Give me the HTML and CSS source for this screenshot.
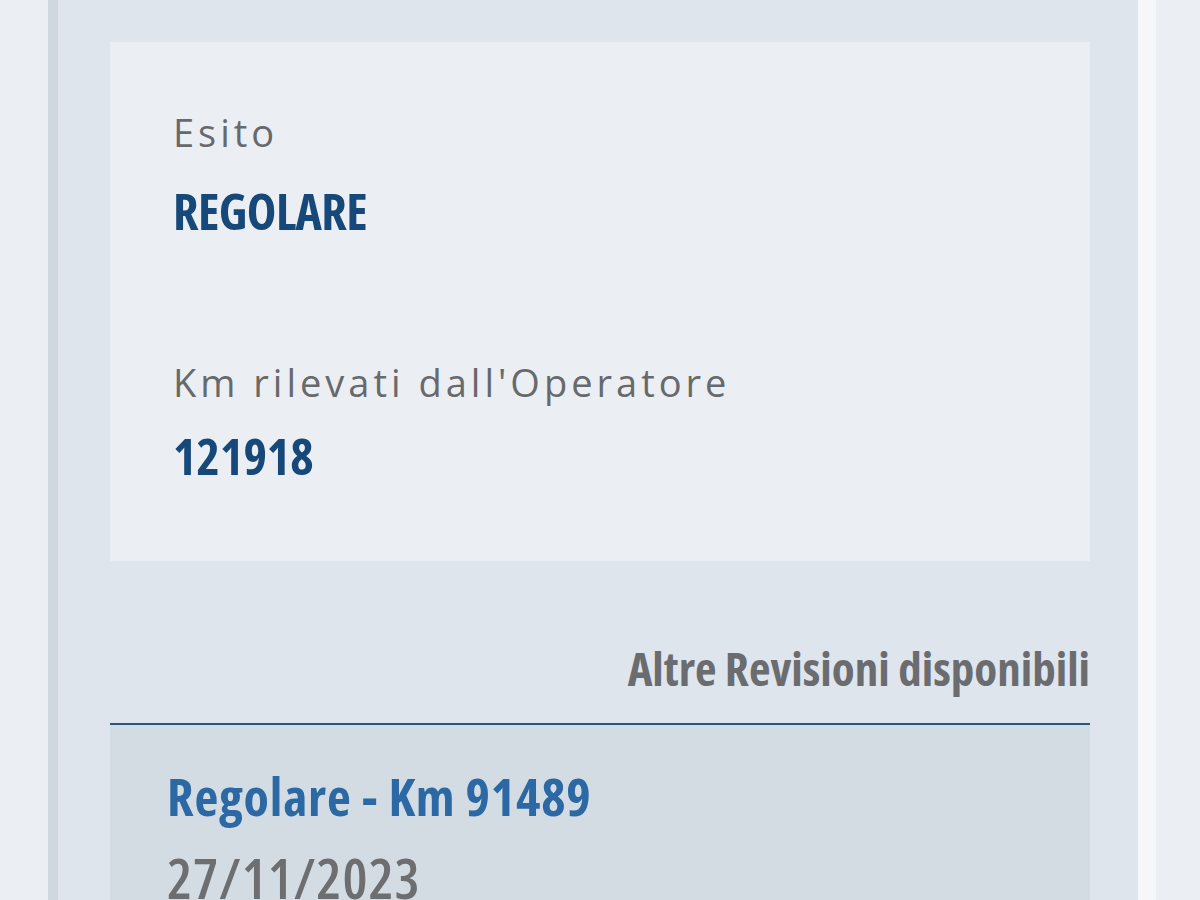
FILE: index.html
```html
<!DOCTYPE html>
<html lang="it">
<head>
<meta charset="utf-8">
<title>Revisione</title>
<link rel="stylesheet" href="styles.css">
</head>
<body>
<div class="page">
  <main class="panel">
    <section class="card">
      <div class="field">
        <div class="label">Esito</div>
        <div class="value">REGOLARE</div>
      </div>
      <div class="field field-km">
        <div class="label">Km rilevati dall'Operatore</div>
        <div class="value">121918</div>
      </div>
    </section>
    <h2 class="others-title">Altre Revisioni disponibili</h2>
    <ul class="others-list">
      <li class="other-item">
        <div class="other-title">Regolare - Km 91489</div>
        <div class="other-date">27/11/2023</div>
      </li>
    </ul>
  </main>
</div>
</body>
</html>
```
FILE: styles.css
```css
html, body {
  margin: 0;
  padding: 0;
}
body {
  background: #ebeff3;
  width: 1200px;
  height: 900px;
  overflow: hidden;
  font-family: "Open Sans", "Noto Sans", sans-serif;
}
.page {
  display: flex;
  height: 900px;
  padding-left: 58px;
}
.panel {
  width: 1080px;
  background: #dee5ed;
  padding: 42px 48px 0 52px;
  box-sizing: border-box;
  box-shadow: -10px 0 0 #cfd7df, 18px 0 0 #f5f7f9;
}
.card {
  background: #ebeff3;
  padding: 67px 40px 75px 63px;
}
.label {
  font-size: 38px;
  line-height: 46px;
  color: #67696c;
  letter-spacing: 4px;
  font-weight: 500;
}
.value {
  font-size: 50px;
  line-height: 60px;
  font-weight: 700;
  color: #17487a;
  margin-top: 26px;
  font-stretch: 75%;
  letter-spacing: -0.6px;
}
.field-km {
  margin-top: 118px;
}
.field-km .value {
  margin-top: 21px;
  letter-spacing: 0;
}
.others-title {
  margin: 79px 0 0;
  padding-bottom: 27px;
  border-bottom: 2px solid #2b5680;
  text-align: right;
  font-size: 47px;
  line-height: 56px;
  font-weight: 700;
  color: #6a6c70;
  font-stretch: 75%;
}
.others-list {
  list-style: none;
  margin: 0;
  padding: 0;
}
.other-item {
  background: #d3dbe3;
  padding: 40px 40px 40px 57px;
}
.other-title {
  font-size: 52px;
  line-height: 62px;
  font-weight: 700;
  color: #2c69a4;
  font-stretch: 75%;
  letter-spacing: 0.8px;
}
.other-date {
  margin-top: 19px;
  font-size: 56px;
  line-height: 62px;
  font-weight: 600;
  color: #6c6e70;
  font-stretch: 75%;
  letter-spacing: 1px;
}
```
